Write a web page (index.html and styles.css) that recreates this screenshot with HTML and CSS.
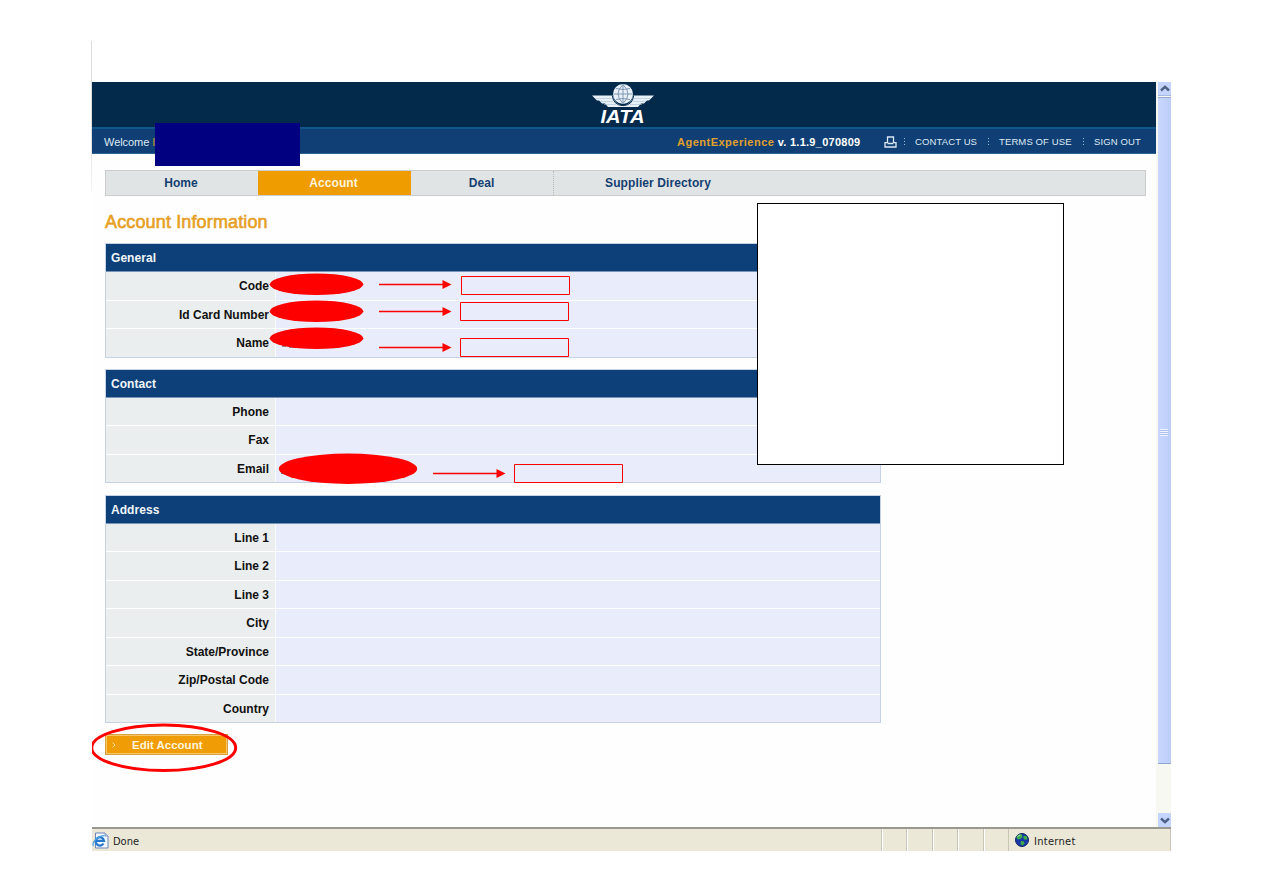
FILE: index.html
```html
<!DOCTYPE html>
<html lang="en">
<head>
<meta charset="utf-8">
<title>Account Information</title>
<link rel="stylesheet" href="styles.css">
</head>
<body>
<div class="window">
  <div class="viewport">
    <div class="page">
      <header class="masthead">
        <svg class="logo" width="62" height="42" viewBox="0 0 62 42">
          <g fill="#e9f1f8">
            <path d="M0 12.500H21Q22 19 27 21.500Q31 23.500 35 21.500Q40 19 41 12.500H62L57 17.500H55L52 20.500H49L46 24H16L13 20.500H10L7 17.500H5Z"/>
            <circle cx="31" cy="11" r="10"/>
          </g>
          <path d="M4 15.500H20M8 18.500H21M12 21.500H24M58 15.500H42M54 18.500H41M50 21.500H38" stroke="#a9bfd3" stroke-width=".6"/>
          <path d="M20.300 12.500Q21.500 22.500 31 22.500Q40.500 22.500 41.700 12.500" fill="none" stroke="#03294b" stroke-width="1"/>
          <path d="M31 1.500V20.500M21.500 11H40.500M24 5.500Q31 7.500 38 5.500M24 16.500Q31 14.500 38 16.500M31 1.500Q21 11 31 20.500M31 1.500Q41 11 31 20.500" fill="none" stroke="#7590aa" stroke-width=".9"/>
          <path d="M14 24.700H48" stroke="#03294b" stroke-width="1.500"/>
          <text x="8.500" y="39.500" textLength="44" lengthAdjust="spacingAndGlyphs" class="logo-text">IATA</text>
        </svg>
      </header>
      <div class="userbar">
        <span class="welcome">Welcome <b>I</b></span>
        <span class="version"><span class="product">AgentExperience</span> <span>v. 1.1.9_070809</span></span>
        <svg class="printer" width="13" height="12" viewBox="0 0 13 12" fill="none" stroke="#dce9f5" stroke-width="1.300"><path d="M3.500 7V1H9.500V7M3 6.700H1V11H12V6.700H10M3.500 7.500H9.500"/></svg>
        <i class="dots"></i><a class="contact">CONTACT US</a>
        <i class="dots"></i><a class="terms">TERMS OF USE</a>
        <i class="dots"></i><a class="signout">SIGN OUT</a>
      </div>
      <nav class="tabs">
        <a class="tab home">Home</a><a class="tab active">Account</a><a class="tab deal">Deal</a><a class="tab supplier">Supplier Directory</a>
      </nav>
      <main>
        <h1>Account Information</h1>
        <section class="panel">
          <h2>General</h2>
          <div class="row"><span class="label">Code</span><span class="value"></span></div>
          <div class="row"><span class="label">Id Card Number</span><span class="value"></span></div>
          <div class="row"><span class="label">Name</span><span class="value"></span></div>
        </section>
        <section class="panel">
          <h2>Contact</h2>
          <div class="row"><span class="label">Phone</span><span class="value"></span></div>
          <div class="row"><span class="label">Fax</span><span class="value"></span></div>
          <div class="row"><span class="label">Email</span><span class="value"></span></div>
        </section>
        <section class="panel">
          <h2>Address</h2>
          <div class="row"><span class="label">Line 1</span><span class="value"></span></div>
          <div class="row"><span class="label">Line 2</span><span class="value"></span></div>
          <div class="row"><span class="label">Line 3</span><span class="value"></span></div>
          <div class="row"><span class="label">City</span><span class="value"></span></div>
          <div class="row"><span class="label">State/Province</span><span class="value"></span></div>
          <div class="row"><span class="label">Zip/Postal Code</span><span class="value"></span></div>
          <div class="row"><span class="label">Country</span><span class="value"></span></div>
        </section>
        <button class="edit"><svg width="4" height="6" viewBox="0 0 4 6"><path d="M.5 .5L3 3L.5 5.500" fill="none" stroke="#ffe0a0"/></svg><span>Edit Account</span></button>
      </main>
    </div>
    <div class="scrollbar">
      <div class="arrow up"><svg width="10" height="7" viewBox="0 0 10 7"><path d="M1 5.500L5 1.800L9 5.500" fill="none" stroke="#4d6185" stroke-width="2.400"/></svg></div>
      <div class="thumb"><i class="grip"></i></div>
      <div class="track"></div>
      <div class="arrow down"><svg width="10" height="7" viewBox="0 0 10 7"><path d="M1 1.500L5 5.200L9 1.500" fill="none" stroke="#4d6185" stroke-width="2.400"/></svg></div>
    </div>
  </div>
  <footer class="status">
    <span class="done">
      <svg width="17" height="17" viewBox="0 0 17 17">
        <path d="M3.500 1H13L16 4V16H3.500Z" fill="#f4f8ff" stroke="#6d86b5"/>
        <path d="M13 1V4H16" fill="#c9d8f0" stroke="#6d86b5" stroke-width=".8"/>
        <path d="M11.500 11.500A4.200 4.200 0 1 1 12 8.800H4" fill="none" stroke="#2479cf" stroke-width="2.200"/>
        <path d="M1.500 14Q-.5 11 5 6.500Q10 2.500 12.500 4" fill="none" stroke="#4ba0e4" stroke-width="1.200"/>
      </svg><span class="status-text">Done</span></span>
    <span class="cell"></span><span class="cell"></span><span class="cell"></span><span class="cell"></span><span class="cell"></span>
    <span class="zone">
      <svg width="14" height="14" viewBox="0 0 14 14">
        <circle cx="7" cy="7" r="6.500" fill="#1738a8" stroke="#10235e"/>
        <path d="M2 3Q4 .8 7 1.500L7.500 4L5 6L3 6.500L1.500 5ZM8.500 3L11.500 3L12.500 6L10.500 7L8.500 5.500ZM6 8L9 8.500L9.500 10.500L7.500 12.500L5.500 11Z" fill="#3fae45"/>
        <path d="M2.500 4Q3.500 2 5.500 2" fill="none" stroke="#9be0c0"/>
      </svg><span class="status-text">Internet</span></span>
  </footer>

  <div class="left-edge"></div>
  <div class="mask"></div>
  <div class="note"></div>
  <svg class="marks" width="1079" height="769" viewBox="92 82 1079 769">
    <path d="M282 346H286M289 347H295M298 347H303M308 347H311M316 348L319 346" stroke="#333" stroke-width="1"/>
    <path d="M281 473H284" stroke="#4aa0d8" stroke-width="2"/>
    <g fill="#f00">
      <ellipse cx="316.500" cy="284.300" rx="46.800" ry="10.800"/>
      <ellipse cx="316.500" cy="311.300" rx="46.800" ry="10.800"/>
      <ellipse cx="316.500" cy="338.300" rx="46.800" ry="10.800"/>
      <ellipse cx="348" cy="468.700" rx="69.200" ry="15.200"/>
      <path d="M442.500 280L451.500 284.500L442.500 289ZM442.500 307L451.500 311.500L442.500 316ZM442.500 343L451.500 347.500L442.500 352ZM496.500 469L505.500 473.500L496.500 478Z"/>
    </g>
    <g fill="none" stroke="#f00">
      <path d="M379 284.500H443M379 311.500H443M379 347.500H443M433 473.500H497" stroke-width="1.400"/>
      <path d="M461.500 276.500H569.500V294.500H461.500ZM460.500 302.500H568.500V320.500H460.500ZM460.500 338.500H568.500V356.500H460.500ZM514.500 464.500H622.500V482.500H514.500Z"/>
      <ellipse cx="163.700" cy="747.700" rx="72" ry="22.800" stroke-width="3"/>
    </g>
  </svg>
</div>
</body>
</html>
```
FILE: styles.css
```css
* { box-sizing: border-box; }
body {
  margin: 0;
  padding: 82px 0 0 92px;
  background: #fff;
  font-family: "Liberation Sans", Arial, sans-serif;
  height: 893px;
  overflow: hidden;
}
.window {
  position: relative;
  width: 1079px;
  height: 769px;
  display: flex;
  flex-direction: column;
}
.viewport { display: flex; height: 745px; }
.page { width: 1064px; background: #fefefe; }

.masthead {
  height: 45px;
  background: #03294b;
  display: flex;
  justify-content: center;
  padding-top: 1px;
}
.logo { margin-right: 2px; }
.logo-text { font: italic bold 19px "Liberation Sans", Arial, sans-serif; fill: #fff; }

.userbar {
  height: 27px;
  display: flex;
  align-items: center;
  background: #103f75;
  border-top: 2px solid #0f568d;
  border-bottom: 1px solid #2a6592;
  color: #dfeaf4;
  font-size: 11px;
  white-space: nowrap;
  padding-left: 12px;
  padding-top: 1px;
}
.userbar a { font-size: 9.5px; letter-spacing: .12px; }
.welcome { width: 573px; letter-spacing: -.05px; }
.welcome b { color: #c8a040; font-weight: normal; }
.version { width: 207px; font-weight: bold; letter-spacing: .27px; color: #fff; }
.product { color: #e0a02c; letter-spacing: .5px; }
.printer { margin-right: 7px; }
.dots {
  width: 1px;
  height: 8px;
  margin-right: 10px;
  background: repeating-linear-gradient(#9ebdd6 0 1px, transparent 1px 3px);
}
.contact { width: 73px; }
.terms { width: 84px; }

.tabs {
  display: flex;
  width: 1041px;
  height: 26px;
  margin: 16px 0 0 13px;
  background: #e1e4e4;
  border: 1px solid #cbcccc;
  color: #143f70;
  font-size: 12px;
  font-weight: bold;
  letter-spacing: .1px;
  line-height: 24px;
  text-align: center;
}
.home { width: 152px; padding-right: 2px; }
.active { width: 153px; background: #ee9c00; color: #fff3dc; padding-right: 2px; }
.deal { width: 143px; border-right: 1px dotted #bbb; padding-right: 1px; }
.supplier { width: 208px; }

main { padding-left: 13px; }
h1 {
  margin: 0;
  height: 47px;
  padding-top: 16px;
  color: #e5a024;
  font-size: 18px;
  font-weight: normal;
  -webkit-text-stroke: .6px #e5a024;
  line-height: 20px;
  letter-spacing: .14px;
}
.panel {
  width: 775.5px;
  margin-bottom: 11.3px;
  border: 1px solid #c6d3e4;
  background: #fff;
}
h2 {
  margin: 0;
  height: 28px;
  padding-left: 5px;
  background: #0d4078;
  border-bottom: 1px solid #7893b3;
  color: #f0f5fa;
  font-size: 12px;
  line-height: 28px;
  letter-spacing: .05px;
}
.row { display: flex; height: 28.5px; border-bottom: 1px solid #fff; }
.row:last-child { height: 27.5px; border-bottom: 0; }
.label {
  width: 170px;
  padding-right: 6px;
  border-right: 1px solid #fafbfd;
  background: #ebeeee;
  color: #111;
  font-size: 12px;
  font-weight: bold;
  line-height: 29.5px;
  text-align: right;
}
.value { flex: 1; background: #e9edfb; }

.edit {
  display: flex;
  align-items: center;
  gap: 16px;
  width: 123px;
  height: 21px;
  padding: 0 0 0 6px;
  background: #f09c05;
  border: 1px solid #d9a040;
  box-shadow: inset 0 0 0 1px #f8c868;
  color: #fff4dd;
  font: bold 11.5px "Liberation Sans", Arial, sans-serif;
}

.scrollbar {
  width: 15px;
  padding: 0 0 0 2px;
  display: flex;
  flex-direction: column;
  background: #f8f8f3;
}
.arrow {
  height: 14px;
  display: flex;
  align-items: center;
  justify-content: center;
  background: #c5d4fc;
}
.arrow svg { flex: none; }
.up { border-bottom: 1px solid #a4b8e0; }
.thumb {
  height: 667px;
  margin-top: 1px;
  padding-top: 331px;
  background: linear-gradient(90deg, #c9d7ff, #bccdf9);
  border-top: 1px solid #93a9d4;
  border-bottom: 1px solid #8ea5d0;
}
.grip {
  display: block;
  width: 8px;
  height: 7px;
  margin-left: 2px;
  background: repeating-linear-gradient(#eef3ff 0 1px, #adc1ee 1px 2px);
}
.track { flex: 1; }

.status {
  height: 24px;
  display: flex;
  background: #ebe8d7;
  border-top: 2px solid #999990;
  color: #222;
  font: 11px/22px "DejaVu Sans Condensed", "DejaVu Sans", sans-serif;
}
.done { width: 789px; display: flex; align-items: center; gap: 4px; }
.status-text { padding-top: 3px; }
.cell { width: 25.4px; border-left: 1px solid #c8c6b6; box-shadow: inset 1px 0 #fff; }
.zone {
  flex: 1;
  display: flex;
  align-items: center;
  gap: 5px;
  padding-left: 6px;
  letter-spacing: .3px;
  border-left: 1px solid #c8c6b6;
  border-right: 1px solid #c8c6b6;
}

.left-edge { position: absolute; left: -1px; top: -41px; width: 1px; height: 150px; background: linear-gradient(#ddd 60%, #f4f4f4); }
.mask { position: absolute; left: 63px; top: 41px; width: 145px; height: 43px; background: #000080; }
.note { position: absolute; left: 665px; top: 121px; width: 307px; height: 262px; background: #fff; border: 1px solid #000; }
.marks { position: absolute; left: 0; top: 0; }
```
